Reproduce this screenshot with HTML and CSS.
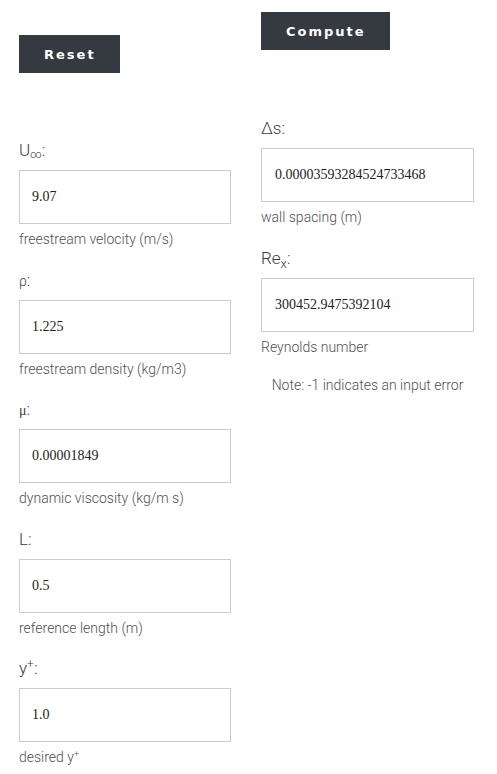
FILE: index.html
```html
<!DOCTYPE html>
<html>
<head>
<meta charset="utf-8">
<link rel="stylesheet" href="styles.css">
</head>
<body>
<div class="page">
  <div class="col col-left">
    <button class="btn">Reset</button>
    <div class="group">
      <div class="label">U<sub class="inf">∞</sub>:</div>
      <input class="field" type="text" value="9.07">
      <div class="help">freestream velocity (m/s)</div>
    </div>
    <div class="group">
      <div class="label"><span class="greek">ρ</span>:</div>
      <input class="field" type="text" value="1.225">
      <div class="help">freestream density (kg/m3)</div>
    </div>
    <div class="group">
      <div class="label"><span class="greek serif">μ</span>:</div>
      <input class="field" type="text" value="0.00001849">
      <div class="help">dynamic viscosity (kg/m s)</div>
    </div>
    <div class="group">
      <div class="label">L:</div>
      <input class="field" type="text" value="0.5">
      <div class="help">reference length (m)</div>
    </div>
    <div class="group">
      <div class="label">y<sup class="plus">+</sup>:</div>
      <input class="field" type="text" value="1.0">
      <div class="help">desired y<sup class="plus-s">+</sup></div>
    </div>
  </div>
  <div class="col col-right">
    <button class="btn">Compute</button>
    <div class="group">
      <div class="label">Δs:</div>
      <input class="field field-r" type="text" value="0.00003593284524733468">
      <div class="help">wall spacing (m)</div>
    </div>
    <div class="group">
      <div class="label">Re<sub class="sx">x</sub>:</div>
      <input class="field field-r" type="text" value="300452.9475392104">
      <div class="help">Reynolds number</div>
    </div>
    <div class="note">Note: -1 indicates an input error</div>
  </div>
</div>
</body>
</html>
```
FILE: styles.css
```css
html, body {
  margin: 0;
  padding: 0;
  background: #ffffff;
}
.page {
  display: flex;
  gap: 30px;
  padding-left: 19px;
  font-family: Roboto, "Liberation Sans", sans-serif;
  font-weight: 300;
}
.col {
  display: flex;
  flex-direction: column;
  align-items: flex-start;
}
.col-left {
  width: 212px;
  padding-top: 35px;
}
.col-right {
  width: 213px;
  padding-top: 12px;
}
.btn {
  height: 38px;
  padding: 0 24px 0 25px;
  border: 0;
  border-radius: 0;
  background: #343a40;
  color: #ffffff;
  font-family: "DejaVu Sans", sans-serif;
  font-weight: bold;
  font-size: 13px;
  letter-spacing: 2px;
  margin-bottom: 65px;
}
.col-right .btn {
  margin-bottom: 66px;
}
.group {
  width: 100%;
  display: flex;
  flex-direction: column;
  margin-bottom: 18.5px;
}
.label {
  height: 24px;
  line-height: 24px;
  font-size: 17px;
  color: #3c3c3c;
  margin-bottom: 8px;
  white-space: nowrap;
}
.label sub, .label sup {
  line-height: 0;
}
.inf {
  font-size: 11px;
  vertical-align: -2px;
}
.sx {
  font-size: 13px;
  vertical-align: -4px;
}
.plus {
  font-size: 12px;
  vertical-align: 6px;
}
.plus-s {
  font-size: 9px;
  line-height: 0;
  vertical-align: 5px;
}
.greek {
  font-size: 14px;
}
.serif {
  font-family: "Liberation Serif", serif;
  font-weight: normal;
}
.field {
  box-sizing: border-box;
  width: 100%;
  height: 54px;
  margin: 0;
  padding: 0 12px;
  border: 1px solid #cccccc;
  border-radius: 0;
  background: #ffffff;
  font-family: "Liberation Serif", serif;
  font-size: 14px;
  color: #222222;
  outline: none;
}
.field-r {
  padding-left: 13px;
}
.help {
  margin-top: 5px;
  height: 20px;
  line-height: 20px;
  font-size: 14px;
  color: #505050;
  white-space: nowrap;
}
.note {
  width: 100%;
  text-align: center;
  height: 20px;
  line-height: 20px;
  font-size: 14px;
  color: #505050;
}
```
